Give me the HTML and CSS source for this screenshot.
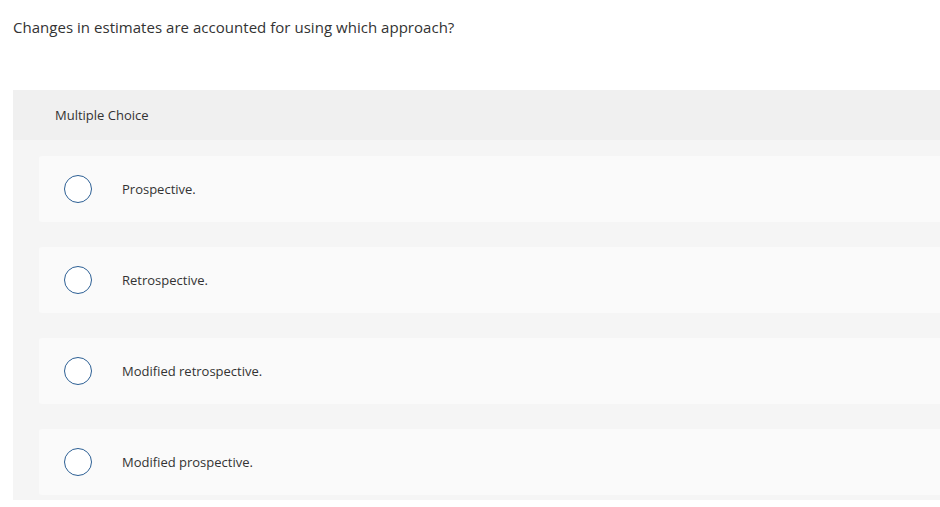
FILE: index.html
```html
<!DOCTYPE html>
<html lang="en">
<head>
<meta charset="utf-8">
<link rel="stylesheet" href="styles.css">
</head>
<body>
<div class="page">
  <p class="question">Changes in estimates are accounted for using which approach?</p>
  <section class="panel">
    <header class="panel-head">Multiple Choice</header>
    <div class="choices">
      <label class="choice"><span class="radio"></span><span class="choice-text">Prospective.</span></label>
      <label class="choice"><span class="radio"></span><span class="choice-text">Retrospective.</span></label>
      <label class="choice"><span class="radio"></span><span class="choice-text">Modified retrospective.</span></label>
      <label class="choice"><span class="radio"></span><span class="choice-text">Modified prospective.</span></label>
    </div>
  </section>
</div>
</body>
</html>
```
FILE: styles.css
```css
html, body {
  margin: 0;
  padding: 0;
  background: #fff;
  overflow: hidden;
}
.page {
  padding: 17px 0 0 13px;
  font-family: "Open Sans", "Liberation Sans", sans-serif;
  color: #333;
}
.question {
  margin: 0;
  font-size: 15px;
  line-height: 20px;
  letter-spacing: 0.03px;
}
.panel {
  margin-top: 53px;
  background: #f5f5f5;
  padding: 0 0 5px 0;
}
.panel-head {
  height: 50px;
  display: flex;
  align-items: center;
  padding-left: 42px;
  background: #f0f0f0;
  font-size: 13px;
}
.choices {
  display: flex;
  flex-direction: column;
  gap: 25px;
  padding: 16px 0 0 26px;
}
.choice {
  height: 66px;
  display: flex;
  align-items: center;
  background: #fafafa;
  border-radius: 3px 0 0 3px;
  padding-left: 25px;
}
.radio {
  width: 26px;
  height: 26px;
  border: 1px solid #2c5f94;
  border-radius: 50%;
  background: #fff;
  flex: none;
}
.choice-text {
  margin-left: 30px;
  font-size: 13px;
}
```
